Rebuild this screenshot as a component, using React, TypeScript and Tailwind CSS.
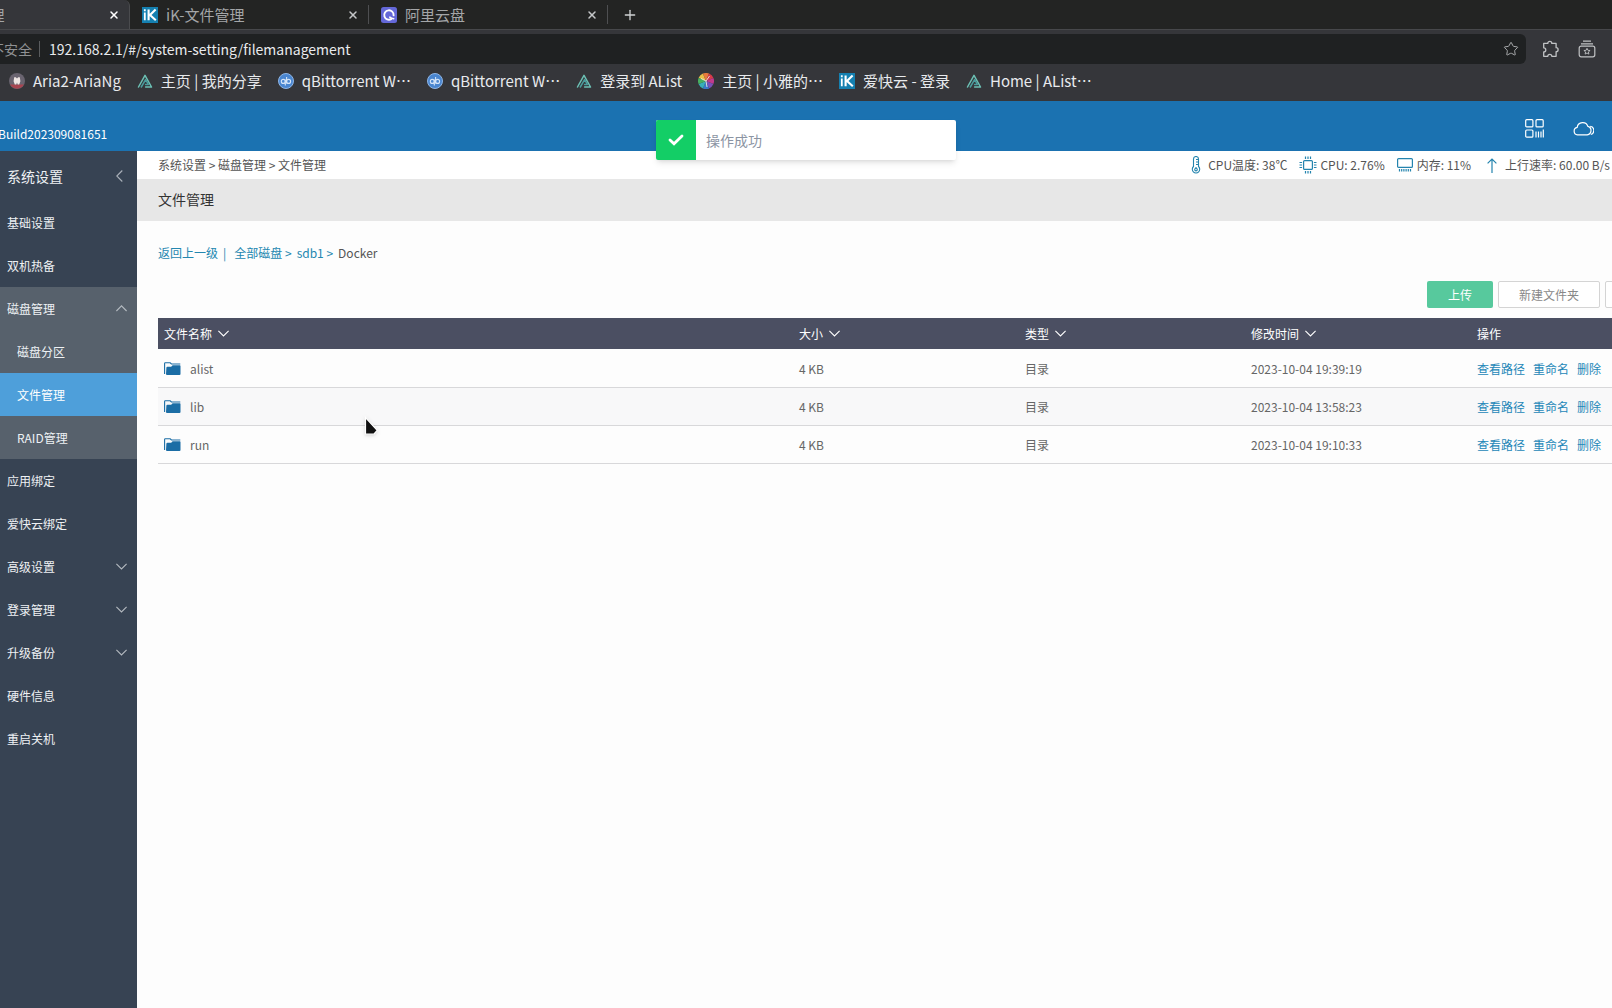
import React from "react";
import { X, Plus, Star } from "lucide-react";

const tabs = [
  { title: "iK-文件管理", icon: "ik", active: true },
  { title: "iK-文件管理", icon: "ik", active: false },
  { title: "阿里云盘", icon: "aliyun", active: false },
];

const bookmarks = [
  { label: "Aria2-AriaNg", icon: "aria" },
  { label: "主页 | 我的分享", icon: "alist" },
  { label: "qBittorrent W…", icon: "qb" },
  { label: "qBittorrent W…", icon: "qb" },
  { label: "登录到 AList", icon: "alist" },
  { label: "主页 | 小雅的…", icon: "flower" },
  { label: "爱快云 - 登录", icon: "ik" },
  { label: "Home | AList…", icon: "alist" },
];

const menuTop = ["基础设置", "双机热备"];
const diskMenu = [
  { label: "磁盘分区", active: false },
  { label: "文件管理", active: true },
  { label: "RAID管理", active: false },
];
const menuBottom = [
  { label: "应用绑定", open: false },
  { label: "爱快云绑定", open: false },
  { label: "高级设置", open: true },
  { label: "登录管理", open: true },
  { label: "升级备份", open: true },
  { label: "硬件信息", open: false },
  { label: "重启关机", open: false },
];

const columns = ["文件名称", "大小", "类型", "修改时间"];
const files = [
  { name: "alist", size: "4 KB", type: "目录", time: "2023-10-04 19:39:19" },
  { name: "lib", size: "4 KB", type: "目录", time: "2023-10-04 13:58:23" },
  { name: "run", size: "4 KB", type: "目录", time: "2023-10-04 19:10:33" },
];

const petals = ["#e8c04a", "#e87a3c", "#d83a4a", "#c03a8c", "#7a50b8", "#3a78c8", "#38b0b8", "#48b060"];

function SiteIcon({ name }: { name: string }) {
  if (name === "ik") {
    return (
      <svg className="h-4 w-4 shrink-0" viewBox="0 0 16 16">
        <rect width="16" height="16" fill="#1580b0" />
        <path d="M2.8 5.6v7.6M2.8 2.3v1.9" stroke="#fff" strokeWidth="1.8" />
        <path d="M6.6 2.5v10.8M13.6 2.6 8 8l5.8 5.3" fill="none" stroke="#fff" strokeWidth="2.1" />
      </svg>
    );
  }
  if (name === "aliyun") {
    return (
      <svg className="h-4 w-4 shrink-0" viewBox="0 0 16 16">
        <rect width="16" height="16" rx="2.5" fill="#6468d8" />
        <path d="M12.600 8.400A4.700 4.700 0 1 0 10.200 12.100" fill="none" stroke="#fff" strokeWidth="1.900" strokeLinecap="round" />
        <path d="M8.800 10.200q1.500 1.300 3.900 1.500" fill="none" stroke="#fff" strokeWidth="1.600" strokeLinecap="round" />
      </svg>
    );
  }
  if (name === "alist") {
    return (
      <svg className="h-4 w-4 shrink-0" viewBox="0 0 16 16" fill="none" strokeLinejoin="round" strokeLinecap="round">
        <path d="M1.500 14 8 2.300 14.500 14H8.600" stroke="#6cc0b4" strokeWidth="1.500" />
        <path d="M4.300 14 8.600 6.600l2.800 4.800H8.600" stroke="#4a9c9c" strokeWidth="1.500" />
      </svg>
    );
  }
  if (name === "qb") {
    return (
      <svg className="h-4 w-4 shrink-0" viewBox="0 0 16 16" fill="none">
        <circle cx="8" cy="8" r="7.500" fill="#4a86d0" stroke="#8fb6e6" />
        <circle cx="5.300" cy="8.400" r="2" stroke="#d4e4f8" strokeWidth="1.100" />
        <circle cx="10.600" cy="8.400" r="2" stroke="#d4e4f8" strokeWidth="1.100" />
        <path d="M7.300 6.400v6M8.600 4v6.400" stroke="#d4e4f8" strokeWidth="1.100" />
      </svg>
    );
  }
  if (name === "aria") {
    return (
      <svg className="h-4 w-4 shrink-0" viewBox="0 0 16 16">
        <circle cx="8" cy="8" r="8" fill="#6a6470" />
        <path d="M1 11.500a8 8 0 0 0 14 0z" fill="#a84450" />
        <path d="M5.200 4.200h1.600L8 5.600l1.200-1.400h1.600l.6 4-1.200 3.400H8.700L8 9.600l-.7 2H5.800L4.600 8.200z" fill="#efe6e4" />
      </svg>
    );
  }
  return (
    <svg className="h-4 w-4 shrink-0" viewBox="0 0 16 16">
      {petals.map((color, i) => (
        <path key={color} d="M8 8 4.900.6a8 8 0 0 1 6.200 0z" fill={color} transform={`rotate(${i * 45 - 45} 8 8)`} />
      ))}
      <path d="m8 8 3.500-5M8 8 3 5.500M8 8l1 6" stroke="#f4e8e0" strokeWidth=".9" />
    </svg>
  );
}

function Chevron({ up = false }: { up?: boolean }) {
  return (
    <svg className="h-[7px] w-[11px] shrink-0" viewBox="0 0 11 7" fill="none" stroke="currentColor" strokeWidth="1.100">
      <path d={up ? "M.4 6 5.500.9 10.600 6" : "M.4.9 5.500 6 10.600.9"} />
    </svg>
  );
}

function FolderIcon() {
  return (
    <svg className="h-[14px] w-[17px] shrink-0" viewBox="0 0 17 14">
      <path d="M.6 12V1.500Q.6.800 1.300.8h4.900l1.200 1.200h8.900" fill="none" stroke="#1b6da5" strokeWidth="1.100" />
      <path d="M2.400 5.600q.2-.8 1-.8h3.800l1.400-1.500h7.200q.7 0 .7.700v8q0 1-1 1H3q-1 0-1-1z" fill="#1b6da5" />
    </svg>
  );
}

function BrowserChrome() {
  return (
    <header className="bg-[#35363a] text-[15px] leading-5 text-[#e8eaed]">
      <div className="flex h-[30px] overflow-hidden border-b border-[#47484b] bg-[#232423]">
        <div className="-ml-[110px] flex">
          {tabs.map((tab, i) => (
            <div
              key={i}
              className={
                tab.active
                  ? "flex h-[30px] w-[240px] items-center rounded-tr-md border-r border-[#4a4b4e] bg-[#35363a] pr-[9px] pl-3"
                  : "flex w-[239px] items-center pl-3"
              }
            >
              <SiteIcon name={tab.icon} />
              <span className="ml-2 flex-1 text-[#a4a6a8]">{tab.title}</span>
              <button
                aria-label="关闭标签页"
                className={tab.active ? "text-white" : "mr-[9px] text-[#c4c6c8]"}
              >
                <X className="h-3 w-3" strokeWidth={3} />
              </button>
              {!tab.active && <span className="h-[19px] w-px bg-[#4e4f51]" />}
            </div>
          ))}
        </div>
        <button aria-label="新标签页" className="ml-[14px] text-[#d0d2d4]">
          <Plus className="h-4 w-4" strokeWidth={2} />
        </button>
      </div>

      <div className="flex h-[34px] items-end">
        <div className="flex h-[30px] flex-1 items-center rounded-r-md bg-[#1f2122] pr-[7px] text-[14px]">
          <span className="-ml-[10px] text-[#8f9193]">不安全</span>
          <span className="mr-[9px] ml-[7px] h-4 w-px bg-[#5a5c5e]" />
          <input
            aria-label="地址"
            defaultValue="192.168.2.1/#/system-setting/filemanagement"
            className="h-[30px] min-w-0 flex-1 bg-transparent outline-none"
          />
          <button aria-label="收藏" className="text-[#a8aaac]">
            <Star className="h-4 w-4" strokeWidth={1.5} />
          </button>
        </div>
        <button aria-label="扩展程序" className="ml-4 flex h-[30px] items-center text-[#c0c2c4]">
          <svg className="h-[18px] w-[18px]" viewBox="0 0 18 18" fill="none" stroke="currentColor" strokeWidth="1.300" strokeLinejoin="round">
            <path d="M1.700 3.400h4.100a2 2 0 0 1 4 0h4.300v4.300a2 2 0 0 1 0 4v4.600h-4.300a2 2 0 0 0-4 0H1.700v-4.300a2.100 2.100 0 0 0 0-4.200z" />
          </svg>
        </button>
        <button aria-label="收藏夹" className="mr-4 ml-[18px] flex h-[30px] items-center text-[#c0c2c4]">
          <svg className="h-[18px] w-[18px]" viewBox="0 0 18 18" fill="none" stroke="currentColor" strokeWidth="1.200">
            <path d="M5 1.200h8M3 3.800h12" />
            <rect x="1.200" y="6.200" width="15.600" height="10.600" rx="2" />
            <path d="m9 8.300.9 2 2.200.2-1.700 1.400.5 2.200L9 13l-1.900 1.100.5-2.200-1.700-1.400 2.200-.2z" strokeWidth=".9" />
          </svg>
        </button>
      </div>

      <nav aria-label="书签栏" className="flex h-[37px] items-center gap-4 overflow-hidden pb-[3px] pl-[9px] whitespace-nowrap">
        {bookmarks.map((b, i) => (
          <a key={i} href="#" className="flex items-center gap-2">
            <SiteIcon name={b.icon} />
            {b.label}
          </a>
        ))}
      </nav>
    </header>
  );
}

function Sidebar() {
  return (
    <aside className="w-[137px] shrink-0 bg-[#374353] text-[#eef1f4]">
      <div className="flex h-[50px] items-center justify-between pr-[14px] pl-[7px] text-[14px]">
        系统设置
        <button aria-label="收起菜单" className="text-[#aab1b9]">
          <svg className="h-3 w-[7px]" viewBox="0 0 7 12" fill="none" stroke="currentColor" strokeWidth="1.100">
            <path d="M6.300.5.800 6l5.500 5.500" />
          </svg>
        </button>
      </div>
      <nav>
        {menuTop.map((label) => (
          <a key={label} href="#" className="flex h-[43px] items-center pl-[7px]">
            {label}
          </a>
        ))}
        <div className="bg-[#57616c]">
          <a href="#" className="flex h-[43px] items-center justify-between pr-[10px] pl-[7px]">
            磁盘管理
            <span className="text-[#b4bac0]">
              <Chevron up />
            </span>
          </a>
          {diskMenu.map((item) => (
            <a
              key={item.label}
              href="#"
              className={
                item.active
                  ? "flex h-[43px] items-center bg-[#4e9fda] pl-[17px] text-white"
                  : "flex h-[43px] items-center pl-[17px]"
              }
            >
              {item.label}
            </a>
          ))}
        </div>
        {menuBottom.map((item) => (
          <a key={item.label} href="#" className="flex h-[43px] items-center justify-between pr-[10px] pl-[7px]">
            {item.label}
            {item.open && (
              <span className="text-[#b4bac0]">
                <Chevron />
              </span>
            )}
          </a>
        ))}
      </nav>
    </aside>
  );
}

function StatusBar() {
  return (
    <div className="flex items-center whitespace-nowrap text-[#555]">
      <svg className="mr-[6px] h-[18px] w-3" viewBox="0 0 12 18" fill="none" stroke="#2484ae" strokeWidth="1.100">
        <path d="M3.500 10.500V3a2.500 2.500 0 0 1 5 0v7.500a3.700 3.700 0 1 1-5 0z" />
        <path d="M6 6h2.500M6 8.500h2.500M6 3.500h2.500M6 11v1.500" />
        <circle cx="6" cy="13.600" r="1.300" />
      </svg>
      CPU温度: 38℃
      <svg className="mr-[3px] ml-3 h-[18px] w-[18px]" viewBox="0 0 18 18" fill="none" stroke="#2484ae" strokeWidth="1.200">
        <rect x="4.600" y="4.600" width="8.800" height="8.800" rx="1" />
        <path d="M6.500.5v2.600M9 .5v2.600M11.500.5v2.600M6.500 14.900v2.600M9 14.900v2.600M11.500 14.900v2.600M.5 6.500h2.600M.5 9h2.600M.5 11.500h2.600M14.900 6.500h2.600M14.900 9h2.600M14.900 11.500h2.600" />
      </svg>
      CPU: 2.76%
      <svg className="mr-1 ml-3 h-[14px] w-4" viewBox="0 0 16 14" fill="none" stroke="#2484ae" strokeWidth="1.200">
        <rect x=".6" y=".6" width="14.800" height="8.800" rx="1" />
        <path d="M2.500 11v2.500M4.700 11v2.500M6.900 11v2.500M9.100 11v2.500M11.300 11v2.500M13.500 11v2.500" />
      </svg>
      内存: 11%
      <svg className="mr-2 ml-4 h-[15px] w-[10px]" viewBox="0 0 10 15" fill="none" stroke="#2484ae" strokeWidth="1.200">
        <path d="M5 15V1M.6 5.400 5 1l4.400 4.400" />
      </svg>
      上行速率: 60.00 B/s
    </div>
  );
}

function FileTable() {
  return (
    <table className="w-full table-fixed text-left">
      <thead className="bg-[#4b4f62] text-white">
        <tr className="h-[31px]">
          {columns.map((col, i) => (
            <th key={col} className={i === 0 ? "px-[6px] font-normal" : "w-[226px] px-[6px] font-normal"}>
              <button className="flex items-center gap-[6px]">
                {col}
                <Chevron />
              </button>
            </th>
          ))}
          <th className="w-[226px] px-[6px] font-normal">操作</th>
        </tr>
      </thead>
      <tbody className="text-[#666]">
        {files.map((file) => (
          <tr key={file.name} className="h-[38px] border-b border-[#d8d8da] even:bg-[#f8f8f9]">
            <td className="px-[6px] pt-[2px]">
              <span className="flex items-center gap-[9px]">
                <FolderIcon />
                <a href="#">{file.name}</a>
              </span>
            </td>
            <td className="px-[6px] pt-[2px]">{file.size}</td>
            <td className="px-[6px] pt-[2px]">{file.type}</td>
            <td className="px-[6px] pt-[2px]">{file.time}</td>
            <td className="px-[6px] pt-[2px]">
              <span className="flex gap-2 text-[#2487b8]">
                <a href="#">查看路径</a>
                <a href="#">重命名</a>
                <a href="#">删除</a>
              </span>
            </td>
          </tr>
        ))}
      </tbody>
    </table>
  );
}

export default function App() {
  return (
    <div
      lang="zh-CN"
      className="relative flex min-h-screen flex-col overflow-hidden bg-[#fdfdfd] font-['Noto_Sans_CJK_SC',sans-serif] text-[12px] leading-[18px]"
    >
      <BrowserChrome />

      {/* Router header */}
      <div className="flex h-[50px] items-center justify-between bg-[#1b72b1] pr-[18px] text-white">
        <span className="-ml-[2px] pt-4">Build202309081651</span>
        <div className="flex items-center gap-[29px] pt-1">
          <button aria-label="二维码">
            <svg className="h-[19px] w-[19px]" viewBox="0 0 19 19" fill="none" stroke="currentColor" strokeWidth="1.200">
              <rect x=".7" y=".7" width="7.200" height="7.200" rx="1" />
              <rect x="11" y=".7" width="7.200" height="7.200" rx="1" />
              <rect x=".7" y="11" width="7.200" height="7.200" rx="1" />
              <path d="M11 12.500v6M13.500 12.500v6M16 12.500v6M18.300 10.500v8" />
            </svg>
          </button>
          <button aria-label="云服务">
            <svg className="h-[15px] w-[21px]" viewBox="0 0 21 15" fill="none" stroke="currentColor" strokeWidth="1.200">
              <path d="M4.500 13.800a3.800 3.800 0 0 1-.3-7.500 5.500 5.500 0 0 1 10.700-.9 4.300 4.300 0 0 1-.7 8.400z" />
              <path d="M17.200 5.300a4.200 4.200 0 0 1 .6 8.200" />
            </svg>
          </button>
        </div>
      </div>

      <div className="flex flex-1">
        <Sidebar />
        <main className="min-w-0 flex-1 overflow-hidden">
          <div className="flex h-7 items-center justify-between bg-white pr-[2px] pl-[21px] text-[#555]">
            <span>系统设置 &gt; 磁盘管理 &gt; 文件管理</span>
            <StatusBar />
          </div>
          <h1 className="flex h-[42px] items-center bg-[#e7e7e7] pb-[2px] pl-[21px] text-[14px] text-[#333]">文件管理</h1>

          {/* the panel is wider than the window and runs off its right edge */}
          <div className="-mr-[85px] pl-[21px]">
            <div className="flex h-[60px] items-center gap-[5px] pt-1 text-[#2487b0]">
              <a href="#">返回上一级</a>
              <span className="mr-[3px]">|</span>
              <a href="#">全部磁盘 &gt;</a>
              <a href="#">sdb1 &gt;</a>
              <span className="text-[#555]">Docker</span>
            </div>
            <div className="mb-[10px] flex justify-end gap-[5px]">
              <button className="h-[27px] w-[66px] rounded-xs bg-[#57c99d] text-white">上传</button>
              <button className="h-[27px] w-[102px] rounded-xs border border-[#d4d4d4] bg-white text-[#888]">
                新建文件夹
              </button>
              <button aria-label="更多" className="h-[27px] w-[92px] rounded-xs border border-[#d4d4d4] bg-white" />
            </div>
            <FileTable />
          </div>
        </main>
      </div>

      {/* Toast */}
      <div
        role="status"
        className="absolute top-[120px] left-1/2 flex h-10 w-[300px] -translate-x-1/2 overflow-hidden rounded-xs bg-white shadow-md"
      >
        <span className="flex w-10 items-center justify-center bg-[#13ce66]">
          <svg className="h-3 w-4" viewBox="0 0 16 12" fill="none" stroke="#fff" strokeWidth="2.800">
            <path d="m2 6 4 3.800L14 2" strokeLinecap="round" />
          </svg>
        </span>
        <span className="flex items-center pl-[10px] text-[14px] text-[#8b94a3]">操作成功</span>
      </div>

      {/* Mouse pointer */}
      <svg className="pointer-events-none absolute top-[416px] left-[364px] h-5 w-4 drop-shadow" viewBox="0 0 16 20">
        <path d="M1.500 1.500v16.700h8.300l3.400-3.800z" fill="#111" stroke="#fff" strokeWidth="1.200" />
      </svg>
    </div>
  );
}
